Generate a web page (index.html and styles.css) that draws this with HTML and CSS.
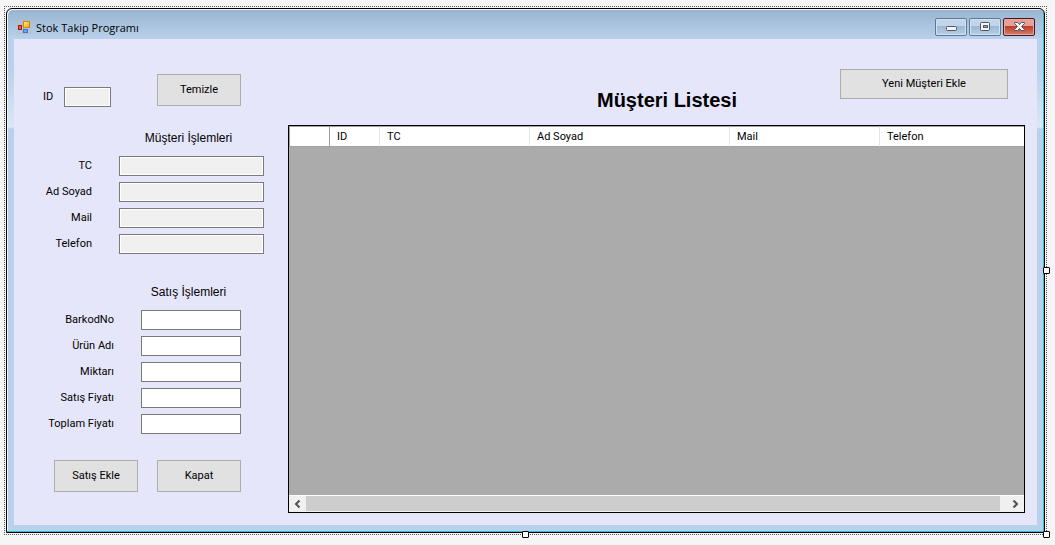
FILE: index.html
```html
<!DOCTYPE html>
<html lang="tr">
<head>
<meta charset="utf-8">
<title>Stok Takip Programı</title>
<link rel="stylesheet" href="styles.css">
</head>
<body>
<div class="selection">
  <main class="window">
    <header class="titlebar">
      <svg class="app-icon" width="14" height="14" viewBox="0 0 14 14" aria-hidden="true">
        <defs>
          <linearGradient id="gold" x2="1" y2="1"><stop offset="0" stop-color="#fff3a0"/><stop offset="1" stop-color="#e8a000"/></linearGradient>
        </defs>
        <path d="M.5 .5h13v13H.5zM.5 8.500h6M5.500 .5v13" fill="none" stroke="#b9bcc2"/>
        <rect x="6.500" y="1.500" width="6" height="6" fill="url(#gold)" stroke="#c48a0c"/>
        <rect x="1.500" y="5.500" width="3" height="4" fill="#e05a45" stroke="#a81c10"/>
        <rect x="6.500" y="9.500" width="4" height="3" fill="#6ea4f0" stroke="#3e73cf"/>
      </svg>
      <h1 class="title">Stok Takip Programı</h1>
      <div class="controls">
        <button class="control" type="button" aria-label="Simge durumuna küçült">
          <svg width="13" height="10" viewBox="0 0 13 10"><rect x="1.500" y="4.500" width="10" height="4" rx="1" fill="#f4f4f4" stroke="#535666"/></svg>
        </button>
        <button class="control" type="button" aria-label="Ekranı kapla">
          <svg width="13" height="10" viewBox="0 0 13 10"><rect x="1.500" y=".5" width="9" height="8" rx="1" fill="#f4f4f4" stroke="#535666"/><rect x="4.500" y="3.500" width="4" height="2" fill="#8eaac8" stroke="#535666"/></svg>
        </button>
        <button class="control control-close" type="button" aria-label="Kapat">
          <svg width="13" height="10" viewBox="0 0 13 10"><path d="M1.500 .5h3.200l1.800 2 1.800-2h3.200v1L8.600 4.500l2.900 3v1H8.300l-1.800-2-1.800 2H1.500v-1l2.900-3-2.900-3z" fill="#f6f6f6" stroke="#535666"/></svg>
        </button>
      </div>
    </header>

    <div class="client">
      <form class="sidebar">
        <div class="id-row">
          <label class="id-label" for="id">ID</label>
          <input class="box box-id" id="id" type="text" readonly>
          <button class="button" type="button">Temizle</button>
        </div>

        <h2 class="group-title">Müşteri İşlemleri</h2>
        <div class="fields fields-customer">
          <label for="tc">TC</label><input class="box" id="tc" type="text" readonly>
          <label for="adsoyad">Ad Soyad</label><input class="box" id="adsoyad" type="text" readonly>
          <label for="mail">Mail</label><input class="box" id="mail" type="text" readonly>
          <label for="telefon">Telefon</label><input class="box" id="telefon" type="text" readonly>
        </div>

        <h2 class="group-title group-title-sale">Satış İşlemleri</h2>
        <div class="fields fields-sale">
          <label for="barkod">BarkodNo</label><input class="box" id="barkod" type="text">
          <label for="urun">Ürün Adı</label><input class="box" id="urun" type="text">
          <label for="miktar">Miktarı</label><input class="box" id="miktar" type="text">
          <label for="satis">Satış Fiyatı</label><input class="box" id="satis" type="text">
          <label for="toplam">Toplam Fiyatı</label><input class="box" id="toplam" type="text">
        </div>

        <div class="actions">
          <button class="button" type="button">Satış Ekle</button>
          <button class="button" type="button">Kapat</button>
        </div>
      </form>

      <section class="list">
        <div class="list-head">
          <h2 class="list-title">Müşteri Listesi</h2>
          <button class="button button-add" type="button">Yeni Müşteri Ekle</button>
        </div>
        <div class="grid-view">
          <div class="grid-body">
            <table class="table">
              <colgroup><col class="c-row"><col class="c-id"><col class="c-tc"><col class="c-name"><col class="c-mail"><col></colgroup>
              <thead>
                <tr><td class="corner"></td><th>ID</th><th>TC</th><th>Ad Soyad</th><th>Mail</th><th>Telefon</th></tr>
              </thead>
            </table>
          </div>
          <div class="scrollbar">
            <button class="arrow" type="button" aria-label="Sola kaydır"><svg width="7" height="8" viewBox="0 0 7 8"><path d="M5.500 .5L2 4l3.500 3.500" fill="none" stroke="#505050" stroke-width="2"/></svg></button>
            <div class="thumb"></div>
            <button class="arrow" type="button" aria-label="Sağa kaydır"><svg width="7" height="8" viewBox="0 0 7 8"><path d="M1.500 .5L5 4 1.500 7.500" fill="none" stroke="#505050" stroke-width="2"/></svg></button>
          </div>
        </div>
      </section>
    </div>
  </main>
  <span class="handle handle-right"></span>
  <span class="handle handle-bottom"></span>
  <span class="handle handle-corner"></span>
</div>
</body>
</html>
```
FILE: styles.css
```css
* {
  box-sizing: border-box;
}

body {
  display: flex;
  min-height: 100vh;
  margin: 0;
  padding: 6px 8px 10px 4px;
  background: #f5f5f5;
  color: #000;
  font: 11px/16px Roboto, "Liberation Sans", Arial, sans-serif;
}

button,
input {
  margin: 0;
  color: inherit;
  font: inherit;
}

h1,
h2 {
  margin: 0;
}

/* Designer selection frame */
.selection {
  position: relative;
  display: flex;
  flex: 1;
  padding: 1px;
  border: 1px dotted #555;
}

.handle {
  position: absolute;
  width: 7px;
  height: 7px;
  border: 1px solid #000;
  border-radius: 1px;
  background: #fff;
}

.handle-right {
  top: 50%;
  right: -4px;
  margin-top: -4px;
}

.handle-bottom {
  bottom: -4px;
  left: 50%;
  margin-left: -4px;
}

.handle-corner {
  right: -4px;
  bottom: -4px;
}

/* Window */
.window {
  display: flex;
  flex: 1;
  flex-direction: column;
  padding: 0 7px 7px;
  border: 1px solid #000;
  border-radius: 6px 6px 0 0;
  background: linear-gradient(#99b4d1, #b9d1ea 30px, #b9d1ea 60px, #dbe8f5 118px, #b9d1ea 120px);
  box-shadow: inset -1px -1px #33bcd8, inset 1px 1px #f0f6fb;
}

.titlebar {
  display: flex;
  align-items: center;
  height: 30px;
  padding-left: 3px;
}

.app-icon {
  margin-top: 6px;
}

.title {
  flex: 1;
  padding: 8px 0 0 5px;
  font: 11px/16px "Open Sans", "Noto Sans", sans-serif;
}

.controls {
  display: flex;
  gap: 2px;
  padding: 6px 2px 0 0;
}

.control {
  display: flex;
  align-items: center;
  justify-content: center;
  width: 32px;
  height: 18px;
  padding: 0;
  border: 1px solid #5f7894;
  border-radius: 2px;
  background: linear-gradient(#c2d6eb 0 45%, #9bb7d3 45%, #b8d0e8);
  box-shadow: inset 0 0 0 1px #d3e2f1;
}

.control-close {
  border-color: #4a1420;
  background: linear-gradient(#e5a197 0 45%, #bb3d26 45%, #d4806c);
  box-shadow: inset 0 0 0 1px #e5a99f;
}

.client {
  display: grid;
  flex: 1;
  grid-template-columns: 274px 1fr;
  padding: 0 12px 12px 0;
  background: #e6e6fa;
}

/* Entry form */
.sidebar {
  padding-top: 35px;
}

.id-row {
  display: flex;
  align-items: flex-start;
  height: 33px;
  padding-left: 29px;
}

.id-label,
.box-id {
  align-self: flex-end;
}

.id-label {
  width: 21px;
  padding-bottom: 2px;
}

.box {
  width: 100%;
  height: 20px;
  padding: 1px 3px;
  border: 1px solid #7a7a7a;
  background: #fff;
}

.box:read-only {
  background: #f0f0f0;
  box-shadow: inset 0 0 0 1px #fff;
}

.box-id {
  width: 47px;
  margin-right: 46px;
}

.button {
  width: 84px;
  height: 32px;
  padding: 0;
  border: 1px solid #adadad;
  background: #e1e1e1;
}

.group-title {
  margin: 23px 0 10px;
  padding-left: 75px;
  font: 12px/16px "Liberation Sans", Arial, sans-serif;
  text-align: center;
}

.group-title-sale {
  margin-top: 30px;
}

.fields {
  display: grid;
  row-gap: 6px;
  column-gap: 27px;
  align-items: center;
  text-align: right;
}

.fields-customer {
  grid-template-columns: 1fr 145px;
  margin-right: 24px;
}

.fields-sale {
  grid-template-columns: 1fr 100px;
  margin-right: 47px;
}

.actions {
  display: flex;
  gap: 19px;
  justify-content: flex-end;
  margin: 26px 47px 0 0;
}

/* Customer list */
.list {
  display: flex;
  flex-direction: column;
}

.list-head {
  display: grid;
  grid-template-columns: 1fr auto 1fr;
  height: 86px;
  padding: 30px 17px 0 38px;
}

.list-title {
  grid-column: 2;
  align-self: end;
  margin-bottom: 13px;
  font: bold 20px/24px "Liberation Sans", Arial, sans-serif;
}

.button-add {
  justify-self: end;
  width: 168px;
  height: 30px;
}

.grid-view {
  display: flex;
  flex: 1;
  flex-direction: column;
  border: 1px solid #000;
  background: #ababab;
}

.grid-body {
  flex: 1;
}

.table {
  width: 100%;
  border-spacing: 0;
  table-layout: fixed;
  background: #fff;
}

.table th,
.table td {
  height: 21px;
  padding: 0 7px;
  border: solid #a0a0a0;
  border-width: 1px 1px 1px 0;
  border-right-color: #e5e5e5;
  font-weight: normal;
  text-align: left;
}

.table th:last-child {
  border-right: 0;
}

.table .corner {
  border-right-color: #a0a0a0;
  border-left-width: 1px;
}

.c-row {
  width: 41px;
}

.c-id {
  width: 50px;
}

.c-tc,
.c-mail {
  width: 150px;
}

.c-name {
  width: 200px;
}

.scrollbar {
  display: flex;
  height: 17px;
  border-top: 1px solid #fff;
  border-bottom: 1px solid #f0f0f0;
  background: #f0f0f0;
}

.arrow {
  display: flex;
  align-items: center;
  justify-content: center;
  width: 17px;
  padding: 0;
  border: 0;
  background: #f0f0f0;
}

.thumb {
  flex: 1;
  margin-right: 7px;
  background: #cdcdcd;
}
```
